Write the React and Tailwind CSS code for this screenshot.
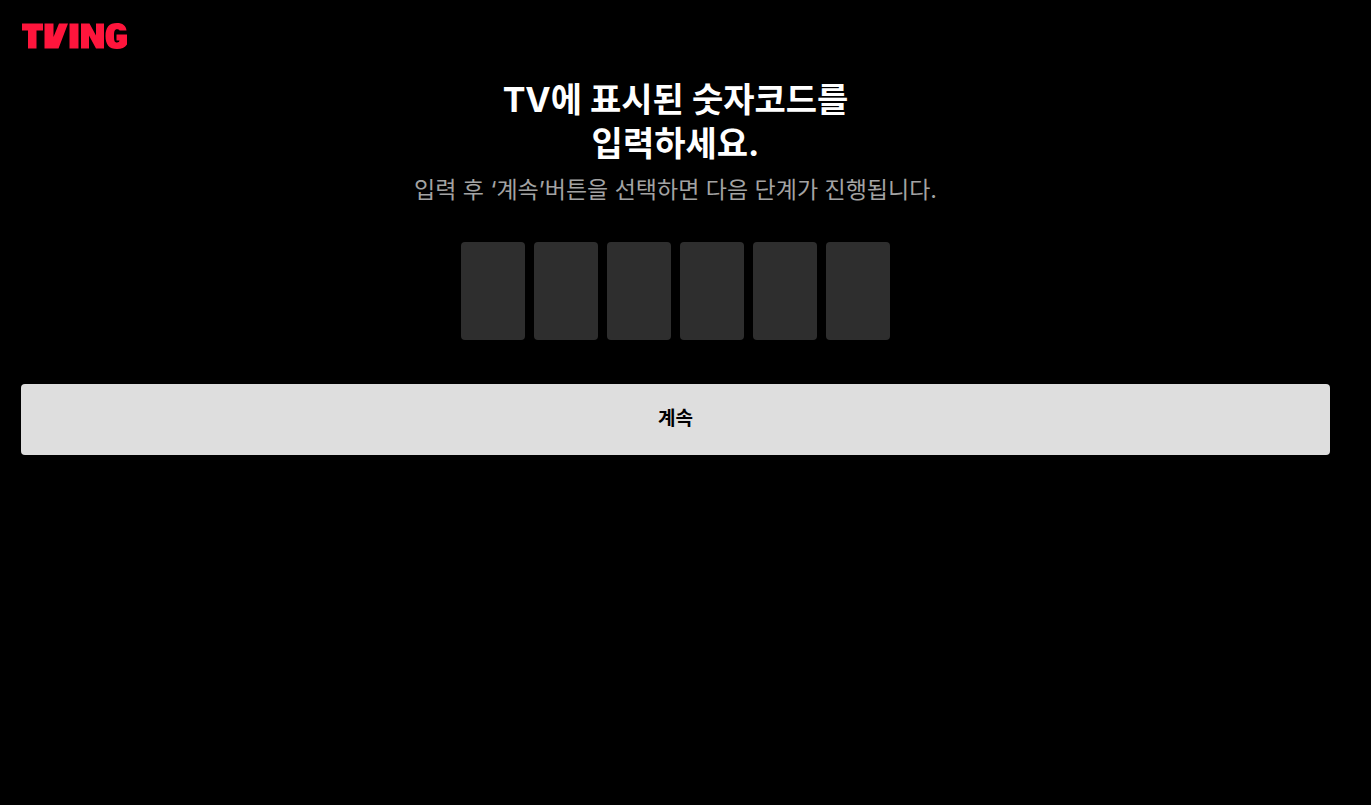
import React, { useRef, useState } from "react";

const CODE_LENGTH = 6;

function Logo() {
  return (
    <svg viewBox="0 0 106 27" className="block h-[27px] w-[106px]" fill="#ff153c" role="img" aria-label="TVING">
      <path d="M1 0.500H22V7.500H15.500V25.500H7V7.500H1Z" />
      <path d="M23.500 0.500H32.500L32.500 14L38 0.500H47L37.500 25.500H23.500Z" />
      <path d="M48.500 0.500H57.500V25.500H48.500Z" />
      <path d="M60 0.500H68.500L75 12.500V0.500H83V25.500H75L68 12.500V25.500H60Z" />
      <path d="M105.500 7.500H98.500C98 6.500 97 6.300 96 6.300C93.500 6.300 93 8.500 93 13C93 17.500 93.500 19.500 96 19.500C97.500 19.500 98.500 18.800 98.500 17.500H95.500V11.500H106V21.500C104 24.500 100.500 26 96 26C88 26 84.500 21.500 84.500 13C84.500 4.500 88 0 96 0C101.500 0 105 2.500 105.500 7.500Z" />
    </svg>
  );
}

export default function App() {
  const [digits, setDigits] = useState(Array(CODE_LENGTH).fill(""));
  const inputs = useRef([]);

  const update = (index, value) => {
    const digit = value.replace(/\D/g, "").slice(-1);
    setDigits(digits.map((d, i) => (i === index ? digit : d)));
    if (digit && index < CODE_LENGTH - 1) inputs.current[index + 1].focus();
  };

  return (
    <div className="min-h-screen bg-black pl-[21px] pr-[41px] font-['Inter','Noto_Sans_CJK_KR',sans-serif] text-white">
      <header className="flex h-[72px] items-center">
        <a href="#" className="block">
          <Logo />
        </a>
      </header>
      <main className="pt-[6px] text-center">
        <h1 className="text-[34px] font-bold leading-[44px]">
          TV에 표시된 숫자코드를
          <br />
          입력하세요.
        </h1>
        <p className="mt-[7px] text-[23px] leading-[34px] text-[#a3a3a3]">
          입력 후 ‘계속’버튼을 선택하면 다음 단계가 진행됩니다.
        </p>
        <form onSubmit={(e) => e.preventDefault()}>
          <div className="mt-[35px] flex justify-center gap-[9px]">
            {digits.map((digit, i) => (
              <input
                key={i}
                ref={(el) => { inputs.current[i] = el; }}
                value={digit}
                onChange={(e) => update(i, e.target.value)}
                inputMode="numeric"
                aria-label={`${i + 1}`}
                className="h-[98px] w-16 rounded bg-[#2e2e2e] text-center text-[40px] font-bold text-white outline-none"
              />
            ))}
          </div>
          <button type="submit" className="mt-11 h-[71px] w-full rounded bg-[#dedede] text-[19px] font-bold text-black">
            계속
          </button>
        </form>
      </main>
    </div>
  );
}
